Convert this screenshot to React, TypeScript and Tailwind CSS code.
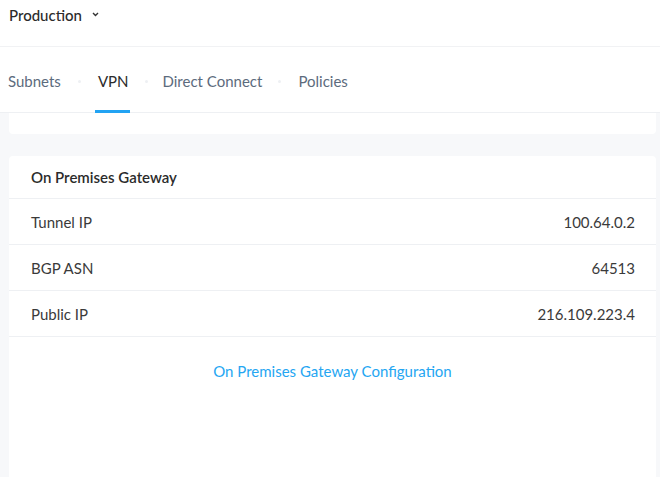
import React from "react";

const Dot = () => <span className="w-[3px] h-[3px] rounded-full bg-[#eef0f3]" />;

export default function App() {
  const rows = [
    ["Tunnel IP", "100.64.0.2"],
    ["BGP ASN", "64513"],
    ["Public IP", "216.109.223.4"],
  ];
  return (
    <div className="w-[660px] h-[477px] overflow-hidden bg-[#f7f8fa] flex flex-col" style={{ fontFamily: "Lato, 'Open Sans', sans-serif" }}>
      <div className="h-[47px] bg-white flex items-start pt-[5px] pl-[9px] border-b border-[#f1f2f4] shrink-0">
        <span className="text-[15px] font-medium text-[#2b2b2b] leading-[20px]">Production</span>
        <svg className="ml-[10px] mt-[7px]" width="7" height="5" viewBox="0 0 7 5">
          <path d="M1 1 L3.5 3.5 L6 1" stroke="#333" strokeWidth="1.4" fill="none" />
        </svg>
      </div>
      <div className="h-[66px] bg-white flex items-stretch pl-[8px] pt-[4px] border-b border-[#eef0f3] shrink-0">
        <div className="flex items-center text-[15px] text-[#5c6b7d]">Subnets</div>
        <div className="flex items-center pl-[17px] pr-[17px]"><Dot /></div>
        <div className="relative flex items-center text-[15px] text-[#2b2b2b]">
          VPN
          <span className="absolute left-[-3px] right-[-1px] bottom-[-1px] h-[3px] bg-[#22a3f3]" />
        </div>
        <div className="flex items-center pl-[16px] pr-[15px]"><Dot /></div>
        <div className="flex items-center text-[15px] text-[#5c6b7d]">Direct Connect</div>
        <div className="flex items-center pl-[16px] pr-[17px]"><Dot /></div>
        <div className="flex items-center text-[15px] text-[#5c6b7d]">Policies</div>
      </div>
      <div className="mx-[9px] mr-[4px] h-[21px] bg-white rounded-b-[4px] shrink-0" />
      <div className="mt-[22px] ml-[9px] mr-[4px] flex-1 bg-white rounded-t-[4px] flex flex-col">
        <div className="h-[43px] flex items-center px-[22px] pt-[1px] border-b border-[#eef0f3] text-[15px] font-semibold text-[#2b2b2b]">
          On Premises Gateway
        </div>
        {rows.map(([l, v]) => (
          <div key={l} className="h-[46px] flex items-center justify-between px-[22px] pr-[21px] pt-[2px] border-b border-[#eef0f3] text-[15px] text-[#3a3a3a]">
            <span>{l}</span>
            <span>{v}</span>
          </div>
        ))}
        <div className="h-[68px] flex items-center justify-center text-[15px] text-[#25a6f2]">
          On Premises Gateway Configuration
        </div>
      </div>
    </div>
  );
}
